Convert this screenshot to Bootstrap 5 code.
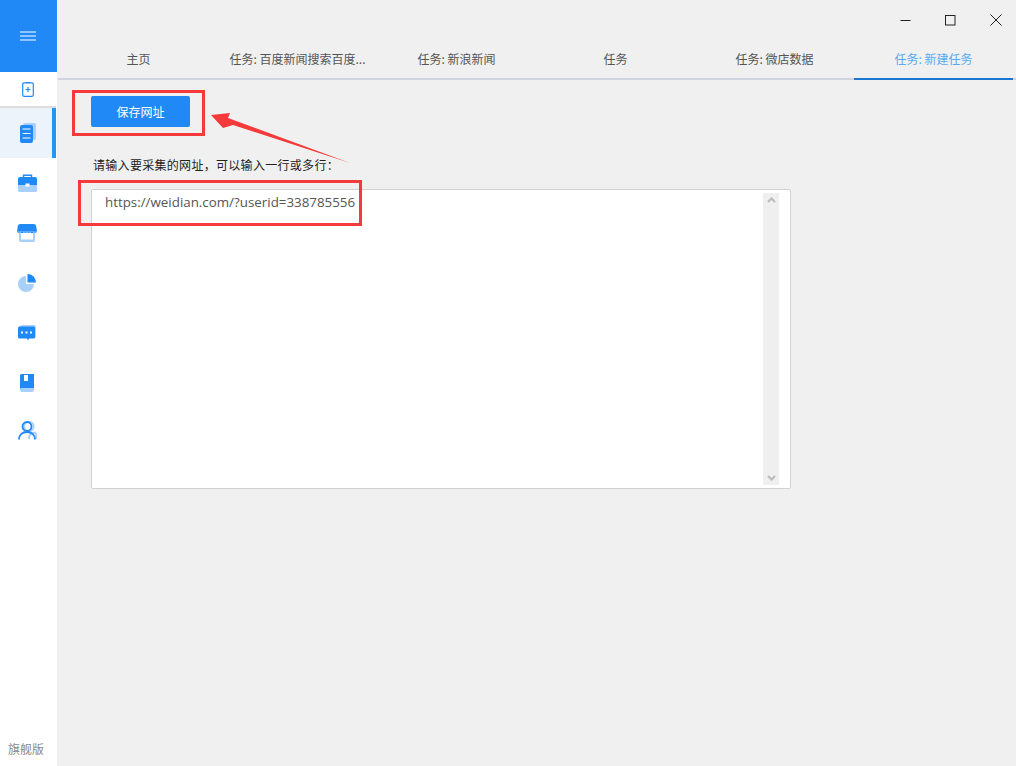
<!DOCTYPE html>
<html lang="zh">
<head>
<meta charset="utf-8">
<title>任务</title>
<link rel="stylesheet" href="https://cdn.jsdelivr.net/npm/bootstrap@5.3.0/dist/css/bootstrap.min.css">
<style>
html,body{height:100%;margin:0;overflow:hidden;}
body{background:#f0f0f0;font-family:"Noto Sans CJK SC","Noto Sans",sans-serif;font-size:12px;color:#333;}
.app-shell{height:766px;position:relative;}
.side-rail{width:57px;background:#fff;}
.rail-head{height:72px;background:#2089f5;padding-right:1px;}
.rail-add{height:36px;border-bottom:2px solid #ddd;margin-right:1px;padding-right:1px;}
.rail-item{height:50px;margin-right:1px;padding-right:2px;}
.rail-active{background:#edf3fb;border-right:4px solid #2196f3;padding-right:0;}
.rail-short{height:45px;}
.rail-foot{font-size:12px;color:#8a8a8a;height:35px;padding-right:5px;}
.win-bar{height:40px;margin-right:-2px;}
.win-btn{width:45px;height:40px;}
.tab-strip{height:40px;border-bottom:2px solid #d0d4e0;margin-left:1px;padding:0 2px 0 1px;}
.tab-cell{width:159px;height:40px;margin-bottom:-2px;color:#555;font-size:12px;border-bottom:2px solid transparent;}
.tab-on{color:#5aa9f0;border-bottom-color:#1976d2;}
.page-body{padding:16px 0 0 34px;}
.save-btn{width:99px;height:31px;background:#2089f5;color:#fff;font-size:12px;border-radius:2px;border:0;padding:0;}
.url-label{margin:29px 0 0 2px;line-height:18px;color:#222;font-size:12px;letter-spacing:.3px;font-family:"Noto Sans CJK TC","Noto Sans",sans-serif;}
.url-box{width:700px;height:300px;margin-top:15px;background:#fff;border:1px solid #d2d2d2;border-radius:2px;position:relative;}
.url-text{padding:3px 0 0 13px;font-family:"Open Sans","Noto Sans",sans-serif;font-size:13.35px;line-height:19px;color:#555;}
.fake-scroll{position:absolute;right:11px;top:3px;bottom:3px;width:16px;background:#efefef;}
.mark-box{position:absolute;border:3px solid #f43a3a;}
.mark-save{left:72px;top:90px;width:133px;height:46px;}
.mark-url{left:78px;top:180px;width:284px;height:46px;}
.mark-arrow{position:absolute;left:205px;top:105px;}
</style>
</head>
<body>
<div class="app-shell d-flex">
  <aside class="side-rail d-flex flex-column flex-shrink-0">
    <div class="rail-head d-flex align-items-center justify-content-center">
      <svg width="16" height="10" viewBox="0 0 16 10"><path d="M0 1h16M0 5h16M0 9h16" stroke="#fff" stroke-width="1"/></svg>
    </div>
    <div class="rail-add d-flex align-items-center justify-content-center">
      <svg width="12" height="16" viewBox="0 0 12 16" fill="none" stroke="#2089f5"><rect x=".7" y="1.800" width="10.600" height="13.500" rx="1.200" stroke-width="1.200"/><path d="M4 1.500h4M3.500 8.500h5M6 6v5" stroke-width="1.200"/></svg>
    </div>
    <div class="rail-item rail-active d-flex align-items-center justify-content-center">
      <svg width="16" height="20" viewBox="0 0 16 20" class="ms-1"><rect x="3" y="0" width="13" height="17" rx="2" fill="#a9d0fa"/><rect x="0" y="2" width="13" height="18" rx="2" fill="#2089f5"/><path d="M2.500 6h8M2.500 10.500h8M2.500 15h8" stroke="#fff" stroke-width="1"/></svg>
    </div>
    <div class="rail-item d-flex align-items-center justify-content-center">
      <svg width="19" height="18" viewBox="0 0 19 18"><path d="M5.500 3.500V1.200h8v2.300" fill="none" stroke="#2089f5" stroke-width="1.400"/><path d="M0 5a2 2 0 0 1 2-2h15a2 2 0 0 1 2 2v6H0z" fill="#2089f5"/><path d="M0 11h19v5.500a1.500 1.500 0 0 1-1.500 1.500h-16A1.500 1.500 0 0 1 0 16.500z" fill="#a9d0fa"/><rect x="7.500" y="9.500" width="4" height="3" fill="#fff"/></svg>
    </div>
    <div class="rail-item d-flex align-items-center justify-content-center">
      <svg width="20" height="18" viewBox="0 0 20 18"><path d="M2 8h16v8a2 2 0 0 1-2 2H4a2 2 0 0 1-2-2z" fill="#a9d0fa"/><rect x="4" y="9" width="12" height="6.500" fill="#fff"/><path d="M3.500 0h13A3 3 0 0 1 19.300 3l.7 4.500H0L.7 3A3 3 0 0 1 3.500 0z" fill="#2089f5"/><path d="M0 7.500a1.700 1.700 0 0 0 3.300 0a1.700 1.700 0 0 0 3.400 0a1.700 1.700 0 0 0 3.300 0a1.700 1.700 0 0 0 3.300 0a1.700 1.700 0 0 0 3.400 0a1.700 1.700 0 0 0 3.300 0z" fill="#2089f5"/></svg>
    </div>
    <div class="rail-item d-flex align-items-center justify-content-center">
      <svg width="18" height="18" viewBox="0 0 18 18"><path d="M8 2a8 8 0 1 0 8 8H8z" fill="#a9d0fa"/><path d="M9.500 0A8.500 8.500 0 0 1 18 8.500H9.500z" fill="#2089f5"/></svg>
    </div>
    <div class="rail-item d-flex align-items-center justify-content-center">
      <svg width="18" height="16" viewBox="0 0 18 16"><rect x="2" y="0" width="16" height="13" rx="2" fill="#a9d0fa"/><path d="M1.500 1.500h14A1.500 1.500 0 0 1 17 3v9a1.500 1.500 0 0 1-1.500 1.500H11L10 15.500 9 13.500H1.500A1.500 1.500 0 0 1 0 12V3a1.500 1.500 0 0 1 1.500-1.500z" fill="#2089f5"/><path d="M3 7.500h2M7.500 7.500h2M12 7.500h2" stroke="#fff" stroke-width="2"/></svg>
    </div>
    <div class="rail-item d-flex align-items-center justify-content-center">
      <svg width="14" height="18" viewBox="0 0 14 18"><rect x="0" y="10" width="14" height="8" rx="2" fill="#a9d0fa"/><path d="M1.500 0H14v14H2a2 2 0 0 0-2 .5V1.500A1.500 1.500 0 0 1 1.500 0z" fill="#2089f5"/><rect x="4" y="1" width="4" height="6" fill="#fff"/></svg>
    </div>
    <div class="rail-item rail-short d-flex align-items-center justify-content-center">
      <svg width="19" height="19" viewBox="0 0 19 19" fill="none"><circle cx="11" cy="5.500" r="4.700" stroke="#a9d0fa" stroke-width="1.800"/><path d="M11 18c0-4 2-6.500 6-6.500 1.300 1.500 1.800 3.500 1.800 6.500" stroke="#a9d0fa" stroke-width="1.800"/><circle cx="9" cy="5.500" r="4.500" stroke="#2089f5" stroke-width="1.900"/><path d="M1 18.500c0-4.500 3-7.500 8-7.500s8 3 8 7.500" stroke="#2089f5" stroke-width="1.900"/></svg>
    </div>
    <div class="rail-foot mt-auto d-flex align-items-center justify-content-center">旗舰版</div>
  </aside>
  <main class="flex-grow-1 d-flex flex-column">
    <div class="win-bar d-flex justify-content-end">
      <div class="win-btn d-flex align-items-center justify-content-center"><svg width="11" height="11" viewBox="0 0 11 11"><path d="M.5 5.500h10" stroke="#222"/></svg></div>
      <div class="win-btn d-flex align-items-center justify-content-center"><svg width="11" height="11" viewBox="0 0 11 11"><rect x=".5" y=".5" width="9.500" height="9.500" fill="none" stroke="#222"/></svg></div>
      <div class="win-btn d-flex align-items-center justify-content-center"><svg width="12" height="12" viewBox="0 0 12 12"><path d="M.5.500l11 11M11.500.500l-11 11" stroke="#222" fill="none"/></svg></div>
    </div>
    <div class="tab-strip d-flex">
      <div class="tab-cell d-flex align-items-center justify-content-center">主页</div>
      <div class="tab-cell d-flex align-items-center justify-content-center">任务: 百度新闻搜索百度...</div>
      <div class="tab-cell d-flex align-items-center justify-content-center">任务: 新浪新闻</div>
      <div class="tab-cell d-flex align-items-center justify-content-center">任务</div>
      <div class="tab-cell d-flex align-items-center justify-content-center">任务: 微店数据</div>
      <div class="tab-cell tab-on d-flex align-items-center justify-content-center">任务: 新建任务</div>
    </div>
    <div class="page-body">
      <button type="button" class="btn save-btn">保存网址</button>
      <div class="url-label">请输入要采集的网址，可以输入一行或多行：</div>
      <div class="url-box">
        <div class="url-text">https://weidian.com/?userid=338785556</div>
        <div class="fake-scroll d-flex flex-column justify-content-between align-items-center py-1">
          <svg width="9" height="6" viewBox="0 0 9 6"><path d="M1 5l3.500-3.500L8 5" fill="none" stroke="#bbb" stroke-width="2"/></svg>
          <svg width="9" height="6" viewBox="0 0 9 6"><path d="M1 1l3.500 3.500L8 1" fill="none" stroke="#bbb" stroke-width="2"/></svg>
        </div>
      </div>
    </div>
  </main>
  <div class="mark-box mark-save"></div>
  <div class="mark-box mark-url"></div>
  <svg class="mark-arrow" width="150" height="65" viewBox="0 0 150 65"><path d="M6 10L25 8 23 13 145 58 28 20 18 23z" fill="#f43a3a"/></svg>
</div>
</body>
</html>
